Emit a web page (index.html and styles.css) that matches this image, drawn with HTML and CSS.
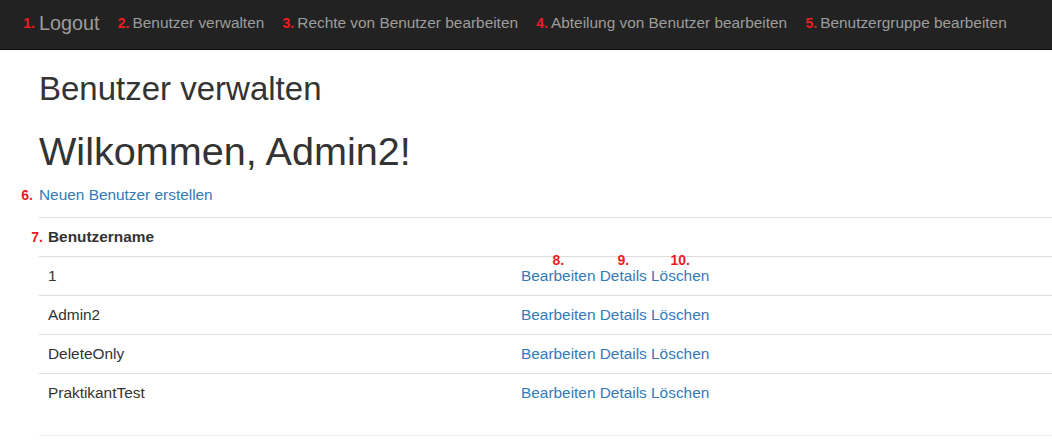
FILE: index.html
```html
<!DOCTYPE html>
<html lang="de">
<head>
<meta charset="utf-8">
<title>Benutzer verwalten</title>
<link rel="stylesheet" href="styles.css">
</head>
<body>
<nav class="navbar">
  <div class="nav-inner">
    <a class="nav-item brand" href="#"><span class="mark nav-mark brand-mark">1.</span>Logout</a>
    <a class="nav-item" href="#"><span class="mark nav-mark">2.</span>Benutzer verwalten</a>
    <a class="nav-item" href="#"><span class="mark nav-mark">3.</span>Rechte von Benutzer bearbeiten</a>
    <a class="nav-item" href="#"><span class="mark nav-mark">4.</span>Abteilung von Benutzer bearbeiten</a>
    <a class="nav-item" href="#"><span class="mark nav-mark">5.</span>Benutzergruppe bearbeiten</a>
  </div>
</nav>
<main class="main">
  <h2 class="page-title">Benutzer verwalten</h2>
  <h1 class="welcome">Wilkommen, Admin2!</h1>
  <p class="create"><a class="link rel" href="#"><span class="mark side-mark">6.</span>Neuen Benutzer erstellen</a></p>
  <table class="users">
    <colgroup><col class="col-name"><col></colgroup>
    <thead>
      <tr><th><span class="rel"><span class="mark side-mark head-mark">7.</span>Benutzername</span></th><th></th></tr>
    </thead>
    <tbody>
      <tr>
        <td>1</td>
        <td><a class="link rel" href="#"><span class="mark top-mark">8.</span>Bearbeiten</a> <a class="link rel" href="#"><span class="mark top-mark">9.</span>Details</a> <a class="link rel" href="#"><span class="mark top-mark">10.</span>Löschen</a></td>
      </tr>
      <tr>
        <td>Admin2</td>
        <td><a class="link" href="#">Bearbeiten</a> <a class="link" href="#">Details</a> <a class="link" href="#">Löschen</a></td>
      </tr>
      <tr>
        <td>DeleteOnly</td>
        <td><a class="link" href="#">Bearbeiten</a> <a class="link" href="#">Details</a> <a class="link" href="#">Löschen</a></td>
      </tr>
      <tr>
        <td>PraktikantTest</td>
        <td><a class="link" href="#">Bearbeiten</a> <a class="link" href="#">Details</a> <a class="link" href="#">Löschen</a></td>
      </tr>
    </tbody>
  </table>
  <hr class="rule">
</main>
</body>
</html>
```

FILE: styles.css
```css
* { box-sizing: border-box; }

html, body {
  margin: 0;
  padding: 0;
  background: #fff;
}

body {
  font-family: "Liberation Sans", Arial, sans-serif;
  font-size: 15.4px;
  line-height: 22px;
  color: #333;
  overflow: hidden;
}

/* ---------- navbar ---------- */
.navbar {
  background: #222;
  border-bottom: 1px solid #080808;
  height: 50px;
}

.nav-inner {
  display: flex;
  align-items: flex-start;
  gap: 33px;
  padding-left: 39px;
}

.nav-item {
  position: relative;
  padding-top: 12px;
  color: #9d9d9d;
  text-decoration: none;
  white-space: nowrap;
  line-height: 22px;
}

.brand {
  font-size: 19.8px;
}

/* ---------- annotation marks ---------- */
.mark {
  position: absolute;
  color: #ed1c24;
  font-family: "Liberation Sans", Arial, sans-serif;
  font-weight: bold;
  font-size: 14px;
  white-space: nowrap;
}

.nav-mark {
  top: 12px;
  right: calc(100% + 3px);
  line-height: 22px;
}

.brand-mark {
  right: calc(100% + 4px);
}

.side-mark {
  top: 2px;
  right: calc(100% + 6px);
  line-height: 14px;
}

.head-mark {
  right: calc(100% + 5px);
}

.top-mark {
  top: -14px;
  left: 50%;
  transform: translateX(-50%);
  line-height: 14px;
}

.rel { position: relative; }

/* ---------- content ---------- */
.main {
  padding-left: 39px;
}

.page-title {
  margin: 21px 0 11px;
  font-size: 33px;
  line-height: 36px;
  font-weight: normal;
}

.welcome {
  margin: 22px 0 11px;
  font-size: 39.6px;
  line-height: 44px;
  font-weight: normal;
}

.create {
  margin: 11px 0 11px;
}

.link {
  color: #337ab7;
  text-decoration: none;
}

.users {
  width: 100%;
  table-layout: fixed;
  border-collapse: separate;
  border-spacing: 0;
  margin: 0 0 23px;
}

.col-name { width: 473px; }

.users th,
.users td {
  padding: 8px 9px;
  border-top: 1px solid #ddd;
  text-align: left;
  vertical-align: top;
  line-height: 22px;
  white-space: nowrap;
}

.users th {
  font-weight: bold;
}

.rule {
  margin: 0;
  border: 0;
  border-top: 1px solid #eee;
  height: 0;
}
```
